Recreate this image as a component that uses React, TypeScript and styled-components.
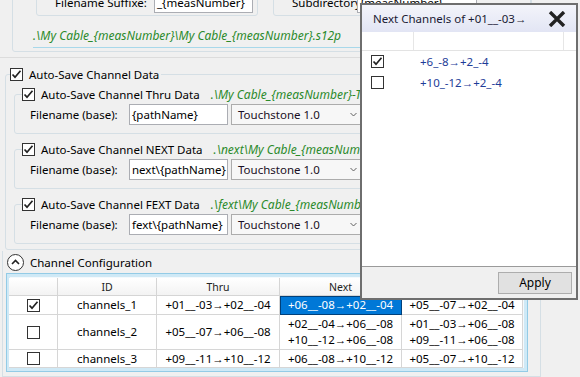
import React from 'react'
import styled, { createGlobalStyle } from 'styled-components'

const GlobalStyle = createGlobalStyle`
  html, body {
    margin: 0;
    padding: 0;
  }
  body {
    background: #f0f0f0;
    font-family: 'Noto Sans', 'Liberation Sans', sans-serif;
    font-size: 11.5px;
    color: #000;
  }
  fieldset {
    margin: 0;
    min-inline-size: 0;
  }
`

const Window = styled.div`
  position: relative;
  width: 580px;
  height: 377px;
  overflow: hidden;
  background: #f0f0f0;
`

// scrolled viewport: the first group is partly above the top edge
const ScrollContent = styled.div`
  width: 545px;
  margin-top: -24px;
`

const TopPanel = styled.div`
  padding-bottom: 5px;
  border-bottom: 1px solid #dcdcdc;
`

const TopBox = styled.div`
  margin-left: 12px;
  width: 518px;
  border: 1px solid #d5dfe5;
  border-radius: 3px;
  padding: 8px 0 3px 0;
`

const BoxRow = styled.div`
  display: flex;
  gap: 15px;
  margin-left: 23px;
`

const SmallBox = styled.div<{ $width?: number }>`
  display: flex;
  align-items: center;
  ${({ $width }) => ($width ? `width: ${$width}px;` : 'flex: 1;')}
  box-sizing: border-box;
  border: 1px solid #d5dfe5;
  border-radius: 3px;
  padding: 6px 4px 2px 18px;
`

const Label = styled.span<{ $width: number }>`
  width: ${({ $width }) => $width}px;
  flex: none;
  white-space: nowrap;
`

const TextBox = styled.div<{ $width: number }>`
  width: ${({ $width }) => $width}px;
  height: 21px;
  box-sizing: border-box;
  flex: none;
  border: 1px solid #abadb3;
  background: #fff;
  padding: 0 2px;
  line-height: 19px;
  white-space: nowrap;
  overflow: hidden;
`

const PathLine = styled.div`
  margin: 12px 10px 0 20px;
  padding-bottom: 3px;
  border-bottom: 1px solid #a8d8ea;
  line-height: 16px;
`

const PathText = styled.span<{ $gap?: number }>`
  color: #2b8a2b;
  font-size: 12px;
  font-style: italic;
  white-space: nowrap;
  margin-left: ${({ $gap }) => $gap ?? 0}px;
`

const AutoSaveGroup = styled.fieldset`
  margin: 7px 0 0 5px;
  width: 530px;
  box-sizing: border-box;
  border: 1px solid #d5dfe5;
  border-radius: 3px;
  padding: 2px 8px 5px 8px;
`

const Legend = styled.legend<{ $shift: number }>`
  display: flex;
  align-items: center;
  height: 18px;
  padding: 0 2px 0 0;
  margin-left: ${({ $shift }) => $shift}px;
  white-space: nowrap;
`

const CheckLabel = styled.span`
  margin-left: 6px;
`

const ChannelGroup = styled.fieldset`
  border: 1px solid #d5dfe5;
  border-radius: 3px;
  padding: 1px 0 8px 15px;
  & + & {
    margin-top: 6px;
  }
`

const FieldRow = styled.div`
  display: flex;
  align-items: center;
  gap: 3px;
`

const ComboBox = styled.div`
  width: 135px;
  height: 21px;
  box-sizing: border-box;
  flex: none;
  display: flex;
  align-items: center;
  justify-content: space-between;
  border: 1px solid #acacac;
  background: #f7f7f7;
  padding: 0 8px 0 6px;
  color: #1a0f24;
`

const Expander = styled.div`
  margin: 1px 0 0 2px;
  width: 539px;
  box-sizing: border-box;
  border: 1px solid #d5dfe5;
  border-top: none;
  padding: 2px 0 4px 3px;
`

const ExpanderHeader = styled.div`
  display: flex;
  align-items: center;
  gap: 6px;
  height: 18px;
  padding-left: 1px;
  margin-bottom: 2px;
`

const ToggleCircle = styled.span`
  width: 17px;
  height: 17px;
  box-sizing: border-box;
  border: 1px solid #333;
  border-radius: 50%;
  display: flex;
  align-items: center;
  justify-content: center;
  background: #fff;
`

const GridFrame = styled.div`
  width: 522px;
  box-sizing: border-box;
  border: 1px solid #93cbe6;
  box-shadow: inset 0 0 0 3px #cfe9f6;
  padding: 4px 4px 3px 2px;
  background: #f4f9fc;
`

const Grid = styled.div`
  display: grid;
  grid-template-columns: 49px 99px 123px 122px 121px;
  background: #fff;
`

const HeaderCell = styled.div`
  height: 18px;
  box-sizing: border-box;
  display: flex;
  align-items: center;
  justify-content: center;
  font-size: 10.5px;
  color: #222;
  background: linear-gradient(#ffffff, #f3f3f3);
  border-right: 1px solid #d5d5d5;
  border-bottom: 1px solid #d5d5d5;
`

const Cell = styled.div<{ $height: number; $selected?: boolean }>`
  height: ${({ $height }) => $height}px;
  box-sizing: border-box;
  display: flex;
  flex-direction: column;
  align-items: center;
  justify-content: center;
  line-height: 16px;
  white-space: nowrap;
  border-right: 1px solid #d6d6d6;
  border-bottom: 1px solid #d6d6d6;
  background: ${({ $selected }) => ($selected ? '#0078d7' : '#fff')};
  color: ${({ $selected }) => ($selected ? '#fff' : '#000')};
  outline: ${({ $selected }) => ($selected ? '1px solid #00407a' : 'none')};
  outline-offset: -1px;
`

const Box = styled.span`
  width: 13px;
  height: 13px;
  box-sizing: border-box;
  flex: none;
  border: 1px solid #333;
  background: #fff;
  display: inline-flex;
  align-items: center;
  justify-content: center;
`

const Popup = styled.div`
  position: absolute;
  left: 360px;
  top: 3px;
  width: 218px;
  height: 297px;
  box-sizing: border-box;
  border: 2px solid #6e6e6e;
  background: #fff;
  display: flex;
  flex-direction: column;
`

const TitleBar = styled.div`
  height: 27px;
  flex: none;
  display: flex;
  align-items: center;
  justify-content: space-between;
  padding: 0 10px 0 11px;
  background: linear-gradient(#f3f4fa, #e2e5f4);
  color: #1a1a33;
`

const ListHeader = styled.div`
  display: grid;
  grid-template-columns: 52px 150px 1fr;
  height: 18px;
  border-bottom: 1px solid #e3e3e3;
  & > span {
    border-right: 1px solid #e6e6e6;
  }
  & > span:last-child {
    border-right: none;
  }
`

const ListRow = styled.div`
  display: grid;
  grid-template-columns: 52px 1fr;
  height: 21px;
  align-items: center;
  &:first-of-type {
    margin-top: 1px;
  }
`

const ListCheck = styled.div`
  padding-left: 9px;
  display: flex;
`

const ListText = styled.span`
  padding-left: 6px;
  color: #1d3c98;
`

const PopupBody = styled.div`
  flex: 1;
`

const Footer = styled.div`
  height: 31px;
  flex: none;
  display: flex;
  align-items: center;
  justify-content: flex-end;
  padding-right: 4px;
  border-top: 1px solid #9a9a9a;
  background: #f0f0f0;
`

const Button = styled.button`
  width: 74px;
  height: 22px;
  border: 1px solid #adadad;
  background: #e1e1e1;
  font-family: inherit;
  font-size: 12px;
  color: #000;
  padding: 0;
`

const CheckBox = ({ checked }: { checked?: boolean }) => (
  <Box>
    {checked && (
      <svg width="11" height="11" viewBox="0 0 11 11">
        <path d="M1.5 5.5 L4 8.2 L9.5 1.8" fill="none" stroke="#222" strokeWidth="1.7" />
      </svg>
    )}
  </Box>
)

const Chevron = () => (
  <svg width="7" height="5" viewBox="0 0 7 5">
    <path d="M0.5 1 L3.5 4 L6.5 1" fill="none" stroke="#606060" strokeWidth="1" />
  </svg>
)

const channelGroups = [
  { name: 'Thru', base: '{pathName}', path: '.\\My Cable_{measNumber}-Thru.s12p' },
  { name: 'NEXT', base: 'next\\{pathName}', path: '.\\next\\My Cable_{measNumber}-Next.s12p' },
  { name: 'FEXT', base: 'fext\\{pathName}', path: '.\\fext\\My Cable_{measNumber}-Fext.s12p' },
]

const rows = [
  { id: 'channels_1', checked: true, h: 19, thru: ['+01__-03→+02__-04'], next: ['+06__-08→+02__-04'], fext: ['+05__-07→+02__-04'], selected: true },
  { id: 'channels_2', checked: false, h: 35, thru: ['+05__-07→+06__-08'], next: ['+02__-04→+06__-08', '+10__-12→+06__-08'], fext: ['+01__-03→+06__-08', '+09__-11→+06__-08'] },
  { id: 'channels_3', checked: false, h: 18, thru: ['+09__-11→+10__-12'], next: ['+06__-08→+10__-12'], fext: ['+05__-07→+10__-12'] },
]

const nextChannels = [
  { label: '+6_-8→+2_-4', checked: true },
  { label: '+10_-12→+2_-4', checked: false },
]

const App: React.FC = () => (
  <Window>
    <GlobalStyle />
    <ScrollContent>
      <TopPanel>
        <TopBox>
          <BoxRow>
            <SmallBox $width={222}>
              <Label $width={99}>Filename Suffixe:</Label>
              <TextBox $width={99}>_{'{measNumber}'}</TextBox>
            </SmallBox>
            <SmallBox>
              <Label $width={65}>Subdirectory:</Label>
              <TextBox $width={120}>{'{measNumber}'}</TextBox>
            </SmallBox>
          </BoxRow>
          <PathLine>
            <PathText>.\My Cable_{'{measNumber}'}\My Cable_{'{measNumber}'}.s12p</PathText>
          </PathLine>
        </TopBox>
      </TopPanel>

      <AutoSaveGroup>
        <Legend $shift={-4}>
          <CheckBox checked />
          <CheckLabel>Auto-Save Channel Data</CheckLabel>
        </Legend>
        {channelGroups.map((g) => (
          <ChannelGroup key={g.name}>
            <Legend $shift={-8}>
              <CheckBox checked />
              <CheckLabel>Auto-Save Channel {g.name} Data</CheckLabel>
              <PathText $gap={11}>{g.path}</PathText>
            </Legend>
            <FieldRow>
              <Label $width={96}>Filename (base):</Label>
              <TextBox $width={99}>{g.base}</TextBox>
              <ComboBox>
                <span>Touchstone 1.0</span>
                <Chevron />
              </ComboBox>
            </FieldRow>
          </ChannelGroup>
        ))}
      </AutoSaveGroup>

      <Expander>
        <ExpanderHeader>
          <ToggleCircle>
            <svg width="9" height="6" viewBox="0 0 9 6">
              <path d="M1 5 L4.5 1.5 L8 5" fill="none" stroke="#222" strokeWidth="1.6" />
            </svg>
          </ToggleCircle>
          <span>Channel Configuration</span>
        </ExpanderHeader>
        <GridFrame>
          <Grid>
            <HeaderCell />
            <HeaderCell>ID</HeaderCell>
            <HeaderCell>Thru</HeaderCell>
            <HeaderCell>Next</HeaderCell>
            <HeaderCell>Fext</HeaderCell>
            {rows.map((r) => (
              <React.Fragment key={r.id}>
                <Cell $height={r.h}>
                  <CheckBox checked={r.checked} />
                </Cell>
                <Cell $height={r.h}>{r.id}</Cell>
                <Cell $height={r.h}>
                  {r.thru.map((t) => (
                    <span key={t}>{t}</span>
                  ))}
                </Cell>
                <Cell $height={r.h} $selected={r.selected}>
                  {r.next.map((t) => (
                    <span key={t}>{t}</span>
                  ))}
                </Cell>
                <Cell $height={r.h}>
                  {r.fext.map((t) => (
                    <span key={t}>{t}</span>
                  ))}
                </Cell>
              </React.Fragment>
            ))}
          </Grid>
        </GridFrame>
      </Expander>
    </ScrollContent>

    <Popup>
      <TitleBar>
        <span>Next Channels of +01__-03→</span>
        <svg width="18" height="16" viewBox="0 0 18 16">
          <path d="M2 1 L16 15 M16 1 L2 15" stroke="#222" strokeWidth="3.4" />
        </svg>
      </TitleBar>
      <PopupBody>
        <ListHeader>
          <span />
          <span />
          <span />
        </ListHeader>
        {nextChannels.map((c) => (
          <ListRow key={c.label}>
            <ListCheck>
              <CheckBox checked={c.checked} />
            </ListCheck>
            <ListText>{c.label}</ListText>
          </ListRow>
        ))}
      </PopupBody>
      <Footer>
        <Button>Apply</Button>
      </Footer>
    </Popup>
  </Window>
)

export default App
